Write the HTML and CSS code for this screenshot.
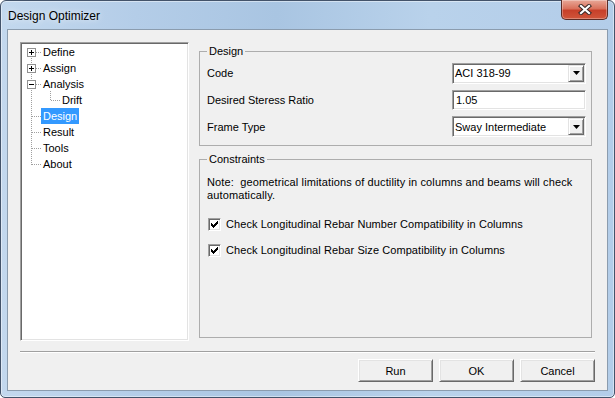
FILE: index.html
```html
<!DOCTYPE html>
<html lang="en">
  <head>
    <meta charset="UTF-8" />
    <title>Design Optimizer</title>
    <link rel="stylesheet" href="styles.css">
  </head>
  <body>
    <div class="window">
      <div class="titlebar">
        <span class="title">Design Optimizer</span>
        <button class="close-btn" aria-label="Close">
          <svg width="14" height="11" viewBox="0 0 14 11">
            <path d="M3 2 L11 9 M11 2 L3 9" stroke="#3b2a28" stroke-width="4.2" stroke-linecap="square" />
            <path d="M3 2 L11 9 M11 2 L3 9" stroke="#ffffff" stroke-width="2.2" stroke-linecap="square" />
          </svg>
        </button>
      </div>

      <div class="client">
        <div class="main">
          <div class="tree">
            <ul class="tree-root">
              <li class="node">
                <span class="twig">
                  <svg class="expander" width="9" height="9" viewBox="0 0 9 9">
                    <rect x="0.5" y="0.5" width="8" height="8" fill="#fff" stroke="#919191" />
                    <rect x="2" y="4" width="5" height="1" fill="#000" />
                    <rect x="4" y="2" width="1" height="5" fill="#000" />
                  </svg>
                </span>
                <span class="label">Define</span>
              </li>
              <li class="node">
                <span class="twig">
                  <svg class="expander" width="9" height="9" viewBox="0 0 9 9">
                    <rect x="0.5" y="0.5" width="8" height="8" fill="#fff" stroke="#919191" />
                    <rect x="2" y="4" width="5" height="1" fill="#000" />
                    <rect x="4" y="2" width="1" height="5" fill="#000" />
                  </svg>
                </span>
                <span class="label">Assign</span>
              </li>
              <li class="node">
                <span class="twig">
                  <svg class="expander" width="9" height="9" viewBox="0 0 9 9">
                    <rect x="0.5" y="0.5" width="8" height="8" fill="#fff" stroke="#919191" />
                    <rect x="2" y="4" width="5" height="1" fill="#000" />
                  </svg>
                </span>
                <span class="label">Analysis</span>
              </li>
              <li class="node child">
                <span class="twig"></span>
                <span class="label">Drift</span>
              </li>
              <li class="node">
                <span class="twig"></span>
                <span class="label selected">Design</span>
              </li>
              <li class="node">
                <span class="twig"></span>
                <span class="label">Result</span>
              </li>
              <li class="node">
                <span class="twig"></span>
                <span class="label">Tools</span>
              </li>
              <li class="node">
                <span class="twig"></span>
                <span class="label">About</span>
              </li>
            </ul>
          </div>

          <div class="panel">
            <fieldset class="group group-design">
              <legend>Design</legend>
              <div class="field">
                <label>Code</label>
                <div class="combo">
                  <span class="combo-text">ACI 318-99</span>
                  <span class="combo-btn">
                    <svg width="7" height="4" viewBox="0 0 7 4"><path d="M0 0 H7 L3.5 4 Z" fill="#000" /></svg>
                  </span>
                </div>
              </div>
              <div class="field">
                <label>Desired Steress Ratio</label>
                <div class="textbox">1.05</div>
              </div>
              <div class="field">
                <label>Frame Type</label>
                <div class="combo">
                  <span class="combo-text">Sway Intermediate</span>
                  <span class="combo-btn">
                    <svg width="7" height="4" viewBox="0 0 7 4"><path d="M0 0 H7 L3.5 4 Z" fill="#000" /></svg>
                  </span>
                </div>
              </div>
            </fieldset>

            <fieldset class="group group-constraints">
              <legend>Constraints</legend>
              <p class="note">Note:&nbsp; geometrical limitations of ductility in columns and beams will check<br />automatically.</p>
              <div class="check-row">
                <span class="checkbox">
                  <svg width="7" height="7" viewBox="0 0 7 7" fill="#000">
                    <rect x="6" y="0" width="1" height="1" />
                    <rect x="5" y="1" width="2" height="1" />
                    <rect x="0" y="2" width="1" height="1" />
                    <rect x="4" y="2" width="3" height="1" />
                    <rect x="0" y="3" width="2" height="1" />
                    <rect x="3" y="3" width="3" height="1" />
                    <rect x="0" y="4" width="5" height="1" />
                    <rect x="1" y="5" width="3" height="1" />
                    <rect x="2" y="6" width="1" height="1" />
                  </svg>
                </span>
                <span class="check-text">Check Longitudinal Rebar Number Compatibility in Columns</span>
              </div>
              <div class="check-row">
                <span class="checkbox">
                  <svg width="7" height="7" viewBox="0 0 7 7" fill="#000">
                    <rect x="6" y="0" width="1" height="1" />
                    <rect x="5" y="1" width="2" height="1" />
                    <rect x="0" y="2" width="1" height="1" />
                    <rect x="4" y="2" width="3" height="1" />
                    <rect x="0" y="3" width="2" height="1" />
                    <rect x="3" y="3" width="3" height="1" />
                    <rect x="0" y="4" width="5" height="1" />
                    <rect x="1" y="5" width="3" height="1" />
                    <rect x="2" y="6" width="1" height="1" />
                  </svg>
                </span>
                <span class="check-text">Check Longitudinal Rebar Size Compatibility in Columns</span>
              </div>
            </fieldset>
          </div>
        </div>

        <div class="separator"></div>

        <div class="actions">
          <button class="btn">Run</button>
          <button class="btn">OK</button>
          <button class="btn">Cancel</button>
        </div>
      </div>
    </div>
  </body>
</html>
```

FILE: styles.css
```css
body {
  margin: 0;
  padding: 0;
  background: #ffffff;
  font-family: "Liberation Sans", Arial, sans-serif;
  font-size: 11px;
  color: #000;
  overflow: hidden;
}

/* Ventana estilo Windows 7 */
.window {
  width: 615px;
  height: 398px;
  box-sizing: border-box;
  border: 1px solid #43536a;
  border-radius: 6px 6px 5px 5px;
  padding: 0 6px 6px;
  background: linear-gradient(
    to right,
    #c3d8ee 0%,
    #b4cde8 22%,
    #a9c5e2 45%,
    #b9d2eb 70%,
    #b3cde9 100%
  );
  box-shadow: inset 0 0 0 1px rgba(255, 255, 255, 0.45);
}

.titlebar {
  height: 28px;
  display: flex;
  justify-content: space-between;
  align-items: flex-start;
}

.title {
  padding-left: 1px;
  line-height: 30px;
  font-size: 12px;
  color: #000;
  text-shadow: 0 0 6px rgba(255, 255, 255, 0.9);
}

.close-btn {
  width: 47px;
  height: 20px;
  margin-top: -1px;
  padding: 0;
  border: 1px solid #5b2c26;
  border-top: none;
  border-radius: 0 0 5px 5px;
  background: linear-gradient(to bottom, #e8a898 0%, #d9715c 45%, #c7402a 55%, #d0553a 100%);
  box-shadow: inset 0 0 0 1px rgba(255, 255, 255, 0.3);
  display: flex;
  align-items: center;
  justify-content: center;
}

.client {
  height: 362px;
  box-sizing: border-box;
  border: 1px solid #8b9cae;
  background: #f0f0f0;
  display: flex;
  flex-direction: column;
}

.main {
  display: flex;
  gap: 10px;
  padding: 12px 12px 0;
}

/* Arbol */
.tree {
  width: 169px;
  height: 299px;
  box-sizing: border-box;
  padding: 1px;
  background: #fff;
  border: 1px solid;
  border-color: #a0a0a0 #fff #fff #a0a0a0;
  box-shadow: inset 1px 1px #696969, inset -1px -1px #e3e3e3;
}

.tree-root {
  list-style: none;
  margin: 0;
  padding: 0;
  position: relative;
}

.tree-root::before {
  content: "";
  position: absolute;
  left: 9px;
  top: 8px;
  width: 1px;
  height: 113px;
  background: repeating-linear-gradient(to bottom, #a0a0a0 0 1px, transparent 1px 2px);
}

.node {
  display: flex;
  align-items: center;
  height: 16px;
}

.twig {
  position: relative;
  flex: none;
  width: 19px;
  height: 16px;
}

.twig::after {
  content: "";
  position: absolute;
  left: 10px;
  top: 8px;
  width: 9px;
  height: 1px;
  background: repeating-linear-gradient(to right, #a0a0a0 0 1px, transparent 1px 2px);
}

.expander {
  position: absolute;
  left: 5px;
  top: 4px;
  z-index: 1;
}

.child .twig {
  margin-left: 19px;
}

.child .twig::before {
  content: "";
  position: absolute;
  left: 9px;
  top: -1px;
  width: 1px;
  height: 10px;
  background: repeating-linear-gradient(to bottom, #a0a0a0 0 1px, transparent 1px 2px);
}

.label {
  padding: 0 2px;
  line-height: 16px;
  height: 16px;
}

.label.selected {
  background: #3399ff;
  color: #fff;
}

/* Panel derecho */
.panel {
  width: 393px;
  display: flex;
  flex-direction: column;
  padding: 3px 0;
}

.group {
  margin: 0;
  border: 1px solid #adadad;
  padding: 2px 5px 5px 7px;
  min-width: 0;
}

.group legend {
  padding: 0 2px;
  line-height: 13px;
}

.group-constraints {
  flex: 1;
  margin-top: 7px;
  padding-top: 10px;
}

.field {
  display: flex;
  align-items: center;
  justify-content: space-between;
  height: 27px;
}

.field:first-of-type {
  height: 26px;
}

.combo,
.textbox {
  width: 134px;
  box-sizing: border-box;
  border: 1px solid;
  border-color: #a0a0a0 #fff #fff #a0a0a0;
  box-shadow: inset 1px 1px #696969, inset -1px -1px #e3e3e3;
  padding: 1px;
  background: #fff;
  display: flex;
  align-items: center;
}

.combo {
  height: 21px;
}

.textbox {
  height: 20px;
  padding-left: 3px;
}

.combo-text {
  padding-left: 1px;
}

.combo-btn {
  margin-left: auto;
  width: 16px;
  height: 17px;
  box-sizing: border-box;
  background: #f0f0f0;
  border: 1px solid;
  border-color: #e3e3e3 #696969 #696969 #e3e3e3;
  box-shadow: inset 1px 1px #fff, inset -1px -1px #a0a0a0;
  display: flex;
  align-items: center;
  justify-content: center;
}

.note {
  margin: 0;
  line-height: 13px;
  letter-spacing: 0.12px;
}

.check-row {
  display: flex;
  align-items: center;
  gap: 5px;
  height: 16px;
  margin-top: 10px;
}

.check-text {
  letter-spacing: 0.07px;
}

.note + .check-row {
  margin-top: 14px;
}

.checkbox {
  width: 13px;
  height: 13px;
  box-sizing: border-box;
  margin-left: 1px;
  background: #fff;
  border: 1px solid;
  border-color: #a0a0a0 #fff #fff #a0a0a0;
  box-shadow: inset 1px 1px #696969, inset -1px -1px #e3e3e3;
  display: flex;
  align-items: center;
  justify-content: center;
}

/* Pie */
.separator {
  margin: 10px 12px 0;
  border-top: 1px solid #a0a0a0;
  border-bottom: 1px solid #fff;
  height: 0;
}

.actions {
  display: flex;
  justify-content: flex-end;
  gap: 6px;
  padding: 6px 12px 0;
}

.btn {
  width: 75px;
  height: 23px;
  padding: 0;
  font-family: "Liberation Sans", Arial, sans-serif;
  font-size: 11px;
  color: #000;
  background: #f0f0f0;
  border: 1px solid;
  border-color: #fff #696969 #696969 #fff;
  box-shadow: inset 1px 1px #e3e3e3, inset -1px -1px #a0a0a0;
}
```
